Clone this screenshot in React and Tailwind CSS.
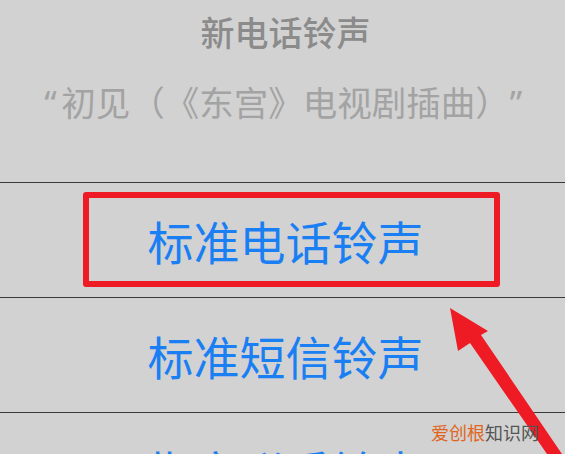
import React from "react";

const cjk = { fontFamily: '"Noto Sans CJK SC", "Noto Sans", sans-serif' };
const latin = { fontFamily: '"Noto Sans", "Liberation Sans", sans-serif' };

function Divider() {
  return <div className="h-px w-full bg-[#3a3a3a] shrink-0" />;
}

function Row({ children }) {
  return (
    <div className="h-[114px] shrink-0 flex items-center justify-center pl-[6px]">
      <span className="text-[46px] leading-[46px] text-[#1a7ff2]" style={cjk}>
        {children}
      </span>
    </div>
  );
}

export default function App() {
  return (
    <div
      className="relative w-[565px] h-[454px] overflow-hidden bg-[#d2d2d2] flex flex-col"
      style={cjk}
    >
      <div className="h-[182px] shrink-0 flex flex-col items-center pl-[6px] pt-[14px]">
        <div className="text-[34px] leading-[35px] font-medium text-[#8b8b8b]">
          新电话铃声
        </div>
        <div
          lang="zh-CN"
          className="mt-[35px] text-[34.5px] leading-[34px] text-[#a3a3a3] whitespace-nowrap [text-spacing-trim:space-all]"
        >
          <span className="inline-block w-[17px]" style={latin}>“</span>
          初见（《东宫》电视剧插曲）
          <span className="inline-block w-[17px]" style={latin}>”</span>
        </div>
      </div>
      <Divider />
      <Row>标准电话铃声</Row>
      <Divider />
      <Row>标准短信铃声</Row>
      <Divider />
      <Row>指定联系铃声</Row>

      {/* annotation box */}
      <div className="absolute left-[83px] top-[192px] w-[417px] h-[95px] border-[6px] border-[#ee1b24] rounded-[3px]" />

      {/* annotation arrow */}
      <svg className="absolute left-0 top-0" width="565" height="454" viewBox="0 0 565 454">
        <polygon
          fill="#ee1b24"
          points="450,308 488,331 481,335 562,454 547,454 470,343 458,351"
        />
      </svg>

      {/* watermark */}
      <div className="absolute left-[431px] top-[421px] text-[18px] leading-[22px] whitespace-nowrap">
        <span className="text-[#e0661e]">爱创根</span>
        <span className="text-[#555555]">知识网</span>
      </div>
    </div>
  );
}
